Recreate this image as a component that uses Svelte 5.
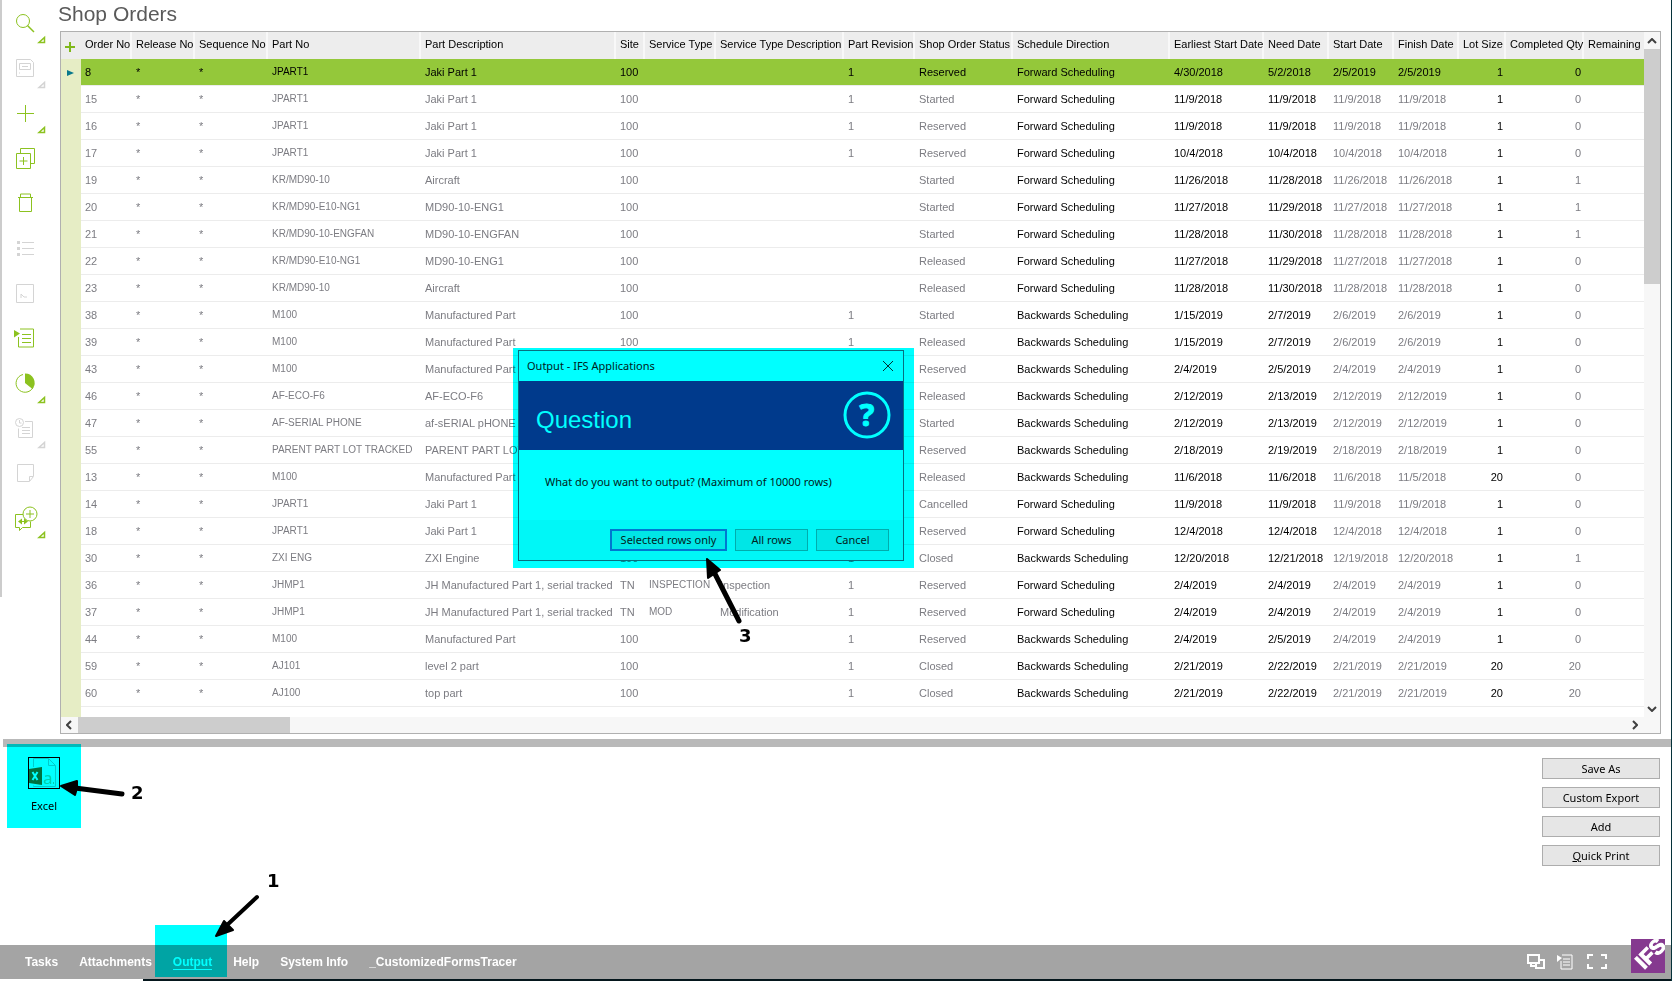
<script lang="ts">
  type Column = { key: string; label: string; width: number; strong?: boolean; right?: boolean; code?: boolean };

  const columns: Column[] = [
    { key: 'order', label: 'Order No', width: 51 },
    { key: 'release', label: 'Release No', width: 63 },
    { key: 'sequence', label: 'Sequence No', width: 73 },
    { key: 'part', label: 'Part No', width: 153, code: true },
    { key: 'description', label: 'Part Description', width: 195 },
    { key: 'site', label: 'Site', width: 29 },
    { key: 'serviceType', label: 'Service Type', width: 71, code: true },
    { key: 'serviceDescription', label: 'Service Type Description', width: 128 },
    { key: 'revision', label: 'Part Revision', width: 71 },
    { key: 'status', label: 'Shop Order Status', width: 98 },
    { key: 'direction', label: 'Schedule Direction', width: 157, strong: true },
    { key: 'earliest', label: 'Earliest Start Date', width: 94, strong: true },
    { key: 'need', label: 'Need Date', width: 65, strong: true },
    { key: 'start', label: 'Start Date', width: 65 },
    { key: 'finish', label: 'Finish Date', width: 65 },
    { key: 'lot', label: 'Lot Size', width: 47, strong: true, right: true },
    { key: 'completed', label: 'Completed Qty', width: 78, right: true }
  ];

  const F = 'Forward Scheduling';
  const B = 'Backwards Scheduling';

  function row(
    order: string, part: string, description: string, revision: string, status: string,
    direction: string, earliest: string, need: string, start: string, finish: string,
    lot = '1', completed = '0', site = '100', serviceType = '', serviceDescription = ''
  ): Record<string, string> {
    return {
      order, release: '*', sequence: '*', part, description, site, serviceType, serviceDescription,
      revision, status, direction, earliest, need, start, finish, lot, completed
    };
  }

  const orders = [
    row('8', 'JPART1', 'Jaki Part 1', '1', 'Reserved', F, '4/30/2018', '5/2/2018', '2/5/2019', '2/5/2019'),
    row('15', 'JPART1', 'Jaki Part 1', '1', 'Started', F, '11/9/2018', '11/9/2018', '11/9/2018', '11/9/2018'),
    row('16', 'JPART1', 'Jaki Part 1', '1', 'Reserved', F, '11/9/2018', '11/9/2018', '11/9/2018', '11/9/2018'),
    row('17', 'JPART1', 'Jaki Part 1', '1', 'Reserved', F, '10/4/2018', '10/4/2018', '10/4/2018', '10/4/2018'),
    row('19', 'KR/MD90-10', 'Aircraft', '', 'Started', F, '11/26/2018', '11/28/2018', '11/26/2018', '11/26/2018', '1', '1'),
    row('20', 'KR/MD90-E10-NG1', 'MD90-10-ENG1', '', 'Started', F, '11/27/2018', '11/29/2018', '11/27/2018', '11/27/2018', '1', '1'),
    row('21', 'KR/MD90-10-ENGFAN', 'MD90-10-ENGFAN', '', 'Started', F, '11/28/2018', '11/30/2018', '11/28/2018', '11/28/2018', '1', '1'),
    row('22', 'KR/MD90-E10-NG1', 'MD90-10-ENG1', '', 'Released', F, '11/27/2018', '11/29/2018', '11/27/2018', '11/27/2018'),
    row('23', 'KR/MD90-10', 'Aircraft', '', 'Released', F, '11/28/2018', '11/30/2018', '11/28/2018', '11/28/2018'),
    row('38', 'M100', 'Manufactured Part', '1', 'Started', B, '1/15/2019', '2/7/2019', '2/6/2019', '2/6/2019'),
    row('39', 'M100', 'Manufactured Part', '1', 'Released', B, '1/15/2019', '2/7/2019', '2/6/2019', '2/6/2019'),
    row('43', 'M100', 'Manufactured Part', '1', 'Reserved', B, '2/4/2019', '2/5/2019', '2/4/2019', '2/4/2019'),
    row('46', 'AF-ECO-F6', 'AF-ECO-F6', '1', 'Released', B, '2/12/2019', '2/13/2019', '2/12/2019', '2/12/2019'),
    row('47', 'AF-SERIAL PHONE', 'af-sERIAL pHONE', '1', 'Started', B, '2/12/2019', '2/13/2019', '2/12/2019', '2/12/2019'),
    row('55', 'PARENT PART LOT TRACKED', 'PARENT PART LOT TRACKED', '1', 'Reserved', B, '2/18/2019', '2/19/2019', '2/18/2019', '2/18/2019'),
    row('13', 'M100', 'Manufactured Part', '1', 'Released', B, '11/6/2018', '11/6/2018', '11/6/2018', '11/5/2018', '20'),
    row('14', 'JPART1', 'Jaki Part 1', '1', 'Cancelled', F, '11/9/2018', '11/9/2018', '11/9/2018', '11/9/2018'),
    row('18', 'JPART1', 'Jaki Part 1', '1', 'Reserved', F, '12/4/2018', '12/4/2018', '12/4/2018', '12/4/2018'),
    row('30', 'ZXI ENG', 'ZXI Engine', '1', 'Closed', B, '12/20/2018', '12/21/2018', '12/19/2018', '12/20/2018', '1', '1'),
    row('36', 'JHMP1', 'JH Manufactured Part 1, serial tracked', '1', 'Reserved', F, '2/4/2019', '2/4/2019', '2/4/2019', '2/4/2019', '1', '0', 'TN', 'INSPECTION', 'Inspection'),
    row('37', 'JHMP1', 'JH Manufactured Part 1, serial tracked', '1', 'Reserved', F, '2/4/2019', '2/4/2019', '2/4/2019', '2/4/2019', '1', '0', 'TN', 'MOD', 'Modification'),
    row('44', 'M100', 'Manufactured Part', '1', 'Reserved', B, '2/4/2019', '2/5/2019', '2/4/2019', '2/4/2019'),
    row('59', 'AJ101', 'level 2 part', '1', 'Closed', B, '2/21/2019', '2/22/2019', '2/21/2019', '2/21/2019', '20', '20'),
    row('60', 'AJ100', 'top part', '1', 'Closed', B, '2/21/2019', '2/22/2019', '2/21/2019', '2/21/2019', '20', '20')
  ];

  const tools = [
    { id: 'search', label: 'Search', menu: true },
    { id: 'save', label: 'Save', menu: true, off: true },
    { id: 'add', label: 'New', menu: true },
    { id: 'copy', label: 'Duplicate' },
    { id: 'delete', label: 'Delete' },
    { id: 'list', label: 'Details', off: true },
    { id: 'attach', label: 'Attachments', off: true },
    { id: 'navigate', label: 'Navigate' },
    { id: 'chart', label: 'Reports', menu: true },
    { id: 'history', label: 'History', menu: true, off: true },
    { id: 'note', label: 'Notes', off: true },
    { id: 'stream', label: 'Streams', menu: true }
  ];

  const tabs = ['Tasks', 'Attachments', 'Output', 'Help', 'System Info', '_CustomizedFormsTracer'];

  let selected = $state('8');
  let activeTab = $state('Output');
  let dialogOpen = $state(true);
</script>

<div class="window">
  <div class="main">
    <nav class="toolbar" aria-label="Record tools">
      {#each tools as tool}
        <button class="tool" class:off={tool.off} aria-label={tool.label} disabled={tool.off}>
          <svg width="24" height="24" viewBox="0 0 24 24">
            {#if tool.id === 'search'}
              <circle cx="10" cy="10" r="6.5" /><path d="M14.5 14.5 21 21" stroke-width="1.5" />
            {:else if tool.id === 'save'}
              <path d="M3.500 3.500h14l3 3v14h-17zM6.500 7.500h11v6h-11zM9 10.500h6M6.500 16.500v1" />
            {:else if tool.id === 'add'}
              <path d="M12.500 4v17M4 12.500h17" />
            {:else if tool.id === 'copy'}
              <path d="M3.500 7.500h14v15h-14zM7.500 7v-4.500h14v15h-3.500M10.500 11v8M6.500 15h8" />
            {:else if tool.id === 'delete'}
              <path d="M6.500 6.500h12v14h-12zM5 6.500h15M7.500 6v-3h10v3" />
            {:else if tool.id === 'list'}
              <path d="M9 6.500h12M9 12.500h12M9 18.500h12" /><path d="M4 6.500h3M4 12.500h3M4 18.500h3" stroke-width="3" />
            {:else if tool.id === 'attach'}
              <path d="M3.500 3.500h17v18h-17zM8 17v-4l3 3h3" />
            {:else if tool.id === 'navigate'}
              <path d="M5.500 11v10h15v-18h-13.500M9 8.500h9M9 12.500h9M9 16.500h9" /><path class="solid" d="M1 4l6 3.500-6 4z" />
            {:else if tool.id === 'chart'}
              <path d="M10 3.500a9 9 0 1 0 10 13" /><path class="solid" d="M12 2.500a9.500 9.500 0 0 1 7.500 15.500L12 12z" />
            {:else if tool.id === 'history'}
              <circle cx="6.500" cy="6.500" r="4" /><path d="M6.500 4v3h2M12 5.500h7.500v16h-14v-9M9 11.500h8M9 14.500h8M9 17.500h8" />
            {:else if tool.id === 'note'}
              <path d="M4.500 3.500h16v12l-4 5h-12zM20 15.500h-3.500v4.500" />
            {:else}
              <circle cx="17" cy="8" r="7" />
              <path d="M17 4v8M13 8h8M10 8.500h-7.500v13h4v3l3-3h8v-6M6 15.500h8" /><path class="solid" d="M5 15.500l4-3v6zM15 15.500l-4-3v6z" />
            {/if}
          </svg>
          {#if tool.menu}
            <svg class="corner" width="6" height="6" viewBox="0 0 6 6"><path d="M0 5.500h5.500v-5z" stroke-width="1.500" /></svg>
          {/if}
        </button>
      {/each}
    </nav>

    <section class="content">
      <h1>Shop Orders</h1>
      <div class="grid">
        <div class="sheet">
          <table>
            <colgroup>
              <col style="width: 20px" />
              {#each columns as column}
                <col style="width: {column.width}px" />
              {/each}
              <col />
            </colgroup>
            <thead>
              <tr>
                <th class="mark">
                  <button class="pick" aria-label="Add column">
                    <svg width="10" height="10" viewBox="0 0 10 10"><path d="M5 0v10M0 5h10" stroke-width="2" /></svg>
                  </button>
                </th>
                {#each columns as column}
                  <th>{column.label}</th>
                {/each}
                <th class="last">Remaining Mtrl</th>
              </tr>
            </thead>
            <tbody>
              {#each orders as order}
                <tr class:selected={selected === order.order} onclick={() => (selected = order.order)}>
                  <td class="mark">{#if selected === order.order}<span class="pointer"></span>{/if}</td>
                  {#each columns as column}
                    <td class:strong={column.strong} class:right={column.right} class:code={column.code}>{order[column.key]}</td>
                  {/each}
                  <td></td>
                </tr>
              {/each}
            </tbody>
          </table>
          <div class="gutter-end"></div>
        </div>
        <div class="scroll-y">
          <button aria-label="Scroll up"><svg width="10" height="6" viewBox="0 0 10 6"><path d="M1 5l4-4 4 4" /></svg></button>
          <div class="thumb-y"></div>
          <button aria-label="Scroll down"><svg width="10" height="6" viewBox="0 0 10 6"><path d="M1 1l4 4 4-4" /></svg></button>
        </div>
        <div class="scroll-x">
          <button aria-label="Scroll left"><svg width="6" height="10" viewBox="0 0 6 10"><path d="M5 1L1 5l4 4" /></svg></button>
          <div class="thumb-x"></div>
          <button aria-label="Scroll right"><svg width="6" height="10" viewBox="0 0 6 10"><path d="M1 1l4 4-4 4" /></svg></button>
        </div>
      </div>
    </section>
  </div>

  <div class="splitter"></div>

  <section class="output">
    <div class="target">
      <button class="excel" onclick={() => (dialogOpen = true)}>
        <svg width="32" height="32" viewBox="0 0 32 32">
          <rect x="0.500" y="0.500" width="31" height="31" fill="none" stroke="#000" />
          <path d="M5.500 10v-8.500h15l7 7v21h-22v-1M20.500 1.500v7h7" fill="none" stroke="#9cc" />
          <path d="M1 12l13-2v18l-13-2z" fill="#12713f" />
          <path d="M4.500 15l5 8M9.500 15l-5 8" stroke="#fff" stroke-width="2" />
          <text x="15" y="27" font-size="17" fill="#8fcfae">a</text>
          <path d="M25.500 25v2" stroke="#8fcfae" />
        </svg>
        <span>Excel</span>
      </button>
      <div class="highlight"></div>
      <svg class="note" width="140" height="84" viewBox="0 0 140 84">
        <path d="M115 50L68 44" stroke-width="5" />
        <path class="head" d="M54 42l16-5 0 7-2 7z" />
        <text x="124" y="55">2</text>
      </svg>
    </div>
    <div class="actions">
      <button>Save As</button>
      <button>Custom Export</button>
      <button>Add</button>
      <button><u>Q</u>uick Print</button>
    </div>
  </section>

  <footer>
    <div class="tabs">
      {#each tabs as tab}
        <div class="tab">
          <button class:active={activeTab === tab} onclick={() => (activeTab = tab)}>{tab}</button>
          {#if tab === 'Output'}
            <div class="highlight"></div>
            <svg class="note" width="140" height="100" viewBox="0 0 140 100">
              <path d="M102 24L71 53" stroke-width="4" />
              <path class="head" d="M61 63l8-15 9 9z" />
              <text x="112" y="14">1</text>
            </svg>
          {/if}
        </div>
      {/each}
    </div>
    <div class="status">
      <button aria-label="Windows">
        <svg width="18" height="18" viewBox="0 0 18 18"><path d="M1 2h11v8H1zM12 7h5v8H9v-5M4 10v3h5" /></svg>
      </button>
      <button aria-label="Navigator">
        <svg width="18" height="18" viewBox="0 0 18 18"><path d="M4 8v8h11V2H5M6 6h7M6 9h7M6 12h7" stroke-width="1" /><path class="solid" d="M0 2l5 3-5 4z" /></svg>
      </button>
      <button aria-label="Full screen">
        <svg width="20" height="18" viewBox="0 0 20 18"><path d="M6 2H1v4M14 2h5v4M1 11v4h5M19 11v4h-5" stroke-width="2" /></svg>
      </button>
      <svg class="logo" width="34" height="34" viewBox="0 0 34 34">
        <rect width="34" height="34" fill="#85398f" />
        <text x="13" y="31" transform="rotate(-45 13 31)">IFS</text>
      </svg>
    </div>
  </footer>
  <div class="taskbar"></div>

  {#if dialogOpen}
    <div class="popup">
      <div class="highlight"></div>
      <div class="dialog" role="dialog" aria-labelledby="dialog-title">
        <header>
          <span id="dialog-title">Output - IFS Applications</span>
          <button aria-label="Close" onclick={() => (dialogOpen = false)}>
            <svg width="12" height="12" viewBox="0 0 12 12"><path d="M1 1l10 10M11 1L1 11" stroke="#033" /></svg>
          </button>
        </header>
        <div class="banner">
          <h2>Question</h2>
          <svg width="48" height="48" viewBox="0 0 48 48">
            <circle cx="24" cy="24" r="22" fill="none" stroke="#0ff" stroke-width="3" />
            <text x="24" y="35" text-anchor="middle">?</text>
          </svg>
        </div>
        <p>What do you want to output? (Maximum of 10000 rows)</p>
        <div class="choices">
          <button class="default" onclick={() => (dialogOpen = false)}>Selected rows only</button>
          <button onclick={() => (dialogOpen = false)}>All rows</button>
          <button onclick={() => (dialogOpen = false)}>Cancel</button>
        </div>
      </div>
      <svg class="note" width="401" height="300" viewBox="0 0 401 300">
        <path d="M226 273L200 222" stroke-width="5" />
        <path class="head" d="M194 211l13 11-12 8z" />
        <text x="226" y="294">3</text>
      </svg>
    </div>
  {/if}
</div>

<style>
  :global(body) {
    margin: 0;
    background: #fff;
  }

  .window {
    position: relative;
    display: flex;
    flex-direction: column;
    min-height: 100vh;
    box-sizing: border-box;
    overflow: hidden;
    background: #fff;
    border-right: 1px solid #06323a;
    font: 11px/14px "Liberation Sans", Arial, sans-serif;
    color: #000;
  }

  button {
    margin: 0;
    padding: 0;
    border: 0;
    background: none;
    font: inherit;
    color: inherit;
  }

  svg {
    display: block;
  }

  .main {
    display: flex;
    padding-right: 10px;
  }

  .toolbar {
    width: 57px;
    height: 597px;
    box-sizing: border-box;
    border-left: 2px solid #ccc;
    flex: none;
    margin-right: 3px;
  }

  .tool {
    display: block;
    position: relative;
    width: 47px;
    height: 45px;
    padding-left: 11px;
  }

  .tool svg {
    fill: none;
    stroke: #8cc220;
    overflow: visible;
  }

  .tool .solid {
    fill: #8cc220;
    stroke: none;
  }

  .tool.off svg {
    stroke: #d4d4d4;
  }

  .tool .corner {
    position: absolute;
    left: 37px;
    top: 37px;
  }

  .content {
    flex: 1;
    min-width: 0;
    padding-bottom: 5px;
  }

  h1 {
    margin: 0;
    padding: 2px 0 5px;
    text-indent: -2px;
    font-size: 21px;
    line-height: 24px;
    font-weight: normal;
    color: #5a5a5a;
  }

  .grid {
    display: grid;
    grid-template-columns: 1fr 16px;
    border: 1px solid #b0b0b0;
  }

  .sheet {
    overflow: hidden;
    min-width: 0;
  }

  table {
    width: 100%;
    table-layout: fixed;
    border-collapse: separate;
    border-spacing: 0;
  }

  th,
  td {
    box-sizing: border-box;
    height: 27px;
    padding: 0 3px 0 4px;
    white-space: nowrap;
    text-align: left;
    font-weight: normal;
  }

  th {
    background: #ededed;
    border-right: 2px solid #f8f8f8;
    padding: 0 0 3px 4px;
  }

  th.last {
    border-right: 0;
  }

  td {
    color: #7c7c82;
    border-bottom: 1px solid #ececec;
  }

  td.strong,
  tr.selected td {
    color: #000;
  }

  td.right {
    text-align: right;
  }

  /* upper-case codes run wide */
  td.code {
    font-size: 10px;
  }

  tr.selected td {
    background: #94c83a;
  }

  .mark,
  tr.selected td.mark {
    padding: 0 0 0 4px;
    border: 0;
    background: #e6edc5;
  }

  th.mark {
    background: #ededed;
  }

  .pick {
    display: block;
    padding-top: 3px;
  }

  .pick svg {
    stroke: #7fb81b;
  }

  .pointer {
    display: block;
    width: 0;
    margin-left: 2px;
    border: 3px solid transparent;
    border-left: 7px solid #08788c;
    border-right: 0;
  }

  .gutter-end {
    width: 20px;
    height: 10px;
    background: #e6edc5;
  }

  .scroll-y {
    display: flex;
    flex-direction: column;
    background: #f7f7f7;
  }

  .scroll-y button {
    height: 17px;
    padding-left: 3px;
  }

  .thumb-y {
    height: 235px;
    margin-bottom: auto;
    background: #cdcdcd;
  }

  .scroll-x {
    grid-column: 1 / 3;
    display: flex;
    align-items: stretch;
    height: 16px;
    padding-right: 16px;
    background: #f7f7f7;
  }

  .scroll-x button {
    width: 17px;
    padding-left: 5px;
  }

  .thumb-x {
    width: 212px;
    margin-right: auto;
    background: #cdcdcd;
  }

  .scroll-y svg,
  .scroll-x svg {
    fill: none;
    stroke: #404040;
    stroke-width: 2;
  }

  .splitter {
    height: 8px;
    margin-left: 3px;
    background: #b9b9b9;
  }

  .output {
    flex: 1;
    display: flex;
    justify-content: space-between;
    padding: 0 11px 0 7px;
  }

  .highlight {
    position: absolute;
    background: #0ff;
    mix-blend-mode: multiply;
    pointer-events: none;
  }

  .note {
    position: absolute;
    overflow: visible;
    pointer-events: none;
    stroke: #000;
    stroke-linecap: round;
  }

  .note .head {
    stroke-width: 2;
    stroke-linejoin: round;
  }

  .note text {
    stroke: none;
    font: bold 18px "DejaVu Sans", Verdana, sans-serif;
  }

  .target {
    position: relative;
    width: 74px;
    height: 81px;
  }

  .target .highlight {
    inset: -3px 0 0;
  }

  .target .note {
    left: 0;
    top: -3px;
  }

  .excel {
    display: flex;
    flex-direction: column;
    align-items: center;
    gap: 9px;
    width: 70px;
    padding: 10px 0 0;
    margin-left: 2px;
  }

  .excel,
  .actions button {
    font: 11px/16px "Noto Sans", Tahoma, sans-serif;
  }

  .actions {
    display: flex;
    flex-direction: column;
    gap: 8px;
    width: 118px;
    padding-top: 11px;
  }

  .actions button {
    height: 21px;
    border: 1px solid #adadad;
    background: #e6e6e6;
    line-height: 18px;
  }

  footer {
    display: flex;
    justify-content: space-between;
    align-items: center;
    height: 34px;
    padding: 0 6px 0 25px;
    background: #a4a4a4;
    color: #fff;
  }

  .tabs {
    display: flex;
    gap: 21px;
    font-size: 12px;
    line-height: 14px;
  }

  .tab {
    position: relative;
  }

  .tab button {
    font-weight: bold;
    border-bottom: 1px solid transparent;
  }

  .tab button.active {
    border-bottom-color: #fff;
  }

  .tab .highlight {
    inset: -30px -15px -7px -18px;
  }

  .tab .note {
    left: -18px;
    top: -82px;
  }

  .status {
    display: flex;
    align-items: center;
    gap: 12px;
  }

  .status button svg {
    fill: none;
    stroke: #fff;
    stroke-width: 2;
  }

  .status .solid {
    fill: #fff;
    stroke: none;
  }

  .logo {
    margin: -12px 0 0 12px;
  }

  .logo text {
    font: bold 21px "Liberation Sans", Arial, sans-serif;
    fill: #fff;
    stroke: #fff;
  }

  .taskbar {
    height: 2px;
    margin-left: 143px;
    background: #04161c;
  }

  .popup {
    position: absolute;
    left: 513px;
    top: 348px;
    width: 401px;
    height: 220px;
  }

  .popup .highlight {
    inset: 0;
  }

  .popup .note {
    left: 0;
    top: 0;
  }

  .dialog {
    position: relative;
    width: 386px;
    margin: 2px 0 0 5px;
    box-sizing: border-box;
    border: 1px solid #067080;
    background: #0ff;
    font: 11px/16px "Noto Sans", "Segoe UI", sans-serif;
    color: #022;
  }

  .dialog header {
    display: flex;
    justify-content: space-between;
    align-items: center;
    height: 30px;
    padding: 0 9px 0 8px;
  }

  .banner {
    display: flex;
    justify-content: space-between;
    height: 69px;
    box-sizing: border-box;
    padding: 10px 12px 0 17px;
    background: #003a8c;
    color: #0ff;
  }

  .banner h2 {
    margin: 16px 0 0;
    font: 24px/26px "Liberation Sans", Arial, sans-serif;
  }

  .banner text {
    font: bold 31px "Noto Sans", sans-serif;
    fill: #0ff;
    stroke: #0ff;
  }

  .dialog p {
    margin: 0;
    padding: 24px 0 30px 26px;
    white-space: nowrap;
  }

  .choices {
    display: flex;
    justify-content: flex-end;
    gap: 8px;
    padding: 9px 14px 9px 0;
    background: #00f7f7;
  }

  .choices button {
    width: 73px;
    height: 22px;
    border: 1px solid #00adad;
    background: #00e6e6;
    line-height: 18px;
  }

  .choices .default {
    width: 117px;
    border: 2px solid #0078d0;
    line-height: 16px;
  }
</style>
